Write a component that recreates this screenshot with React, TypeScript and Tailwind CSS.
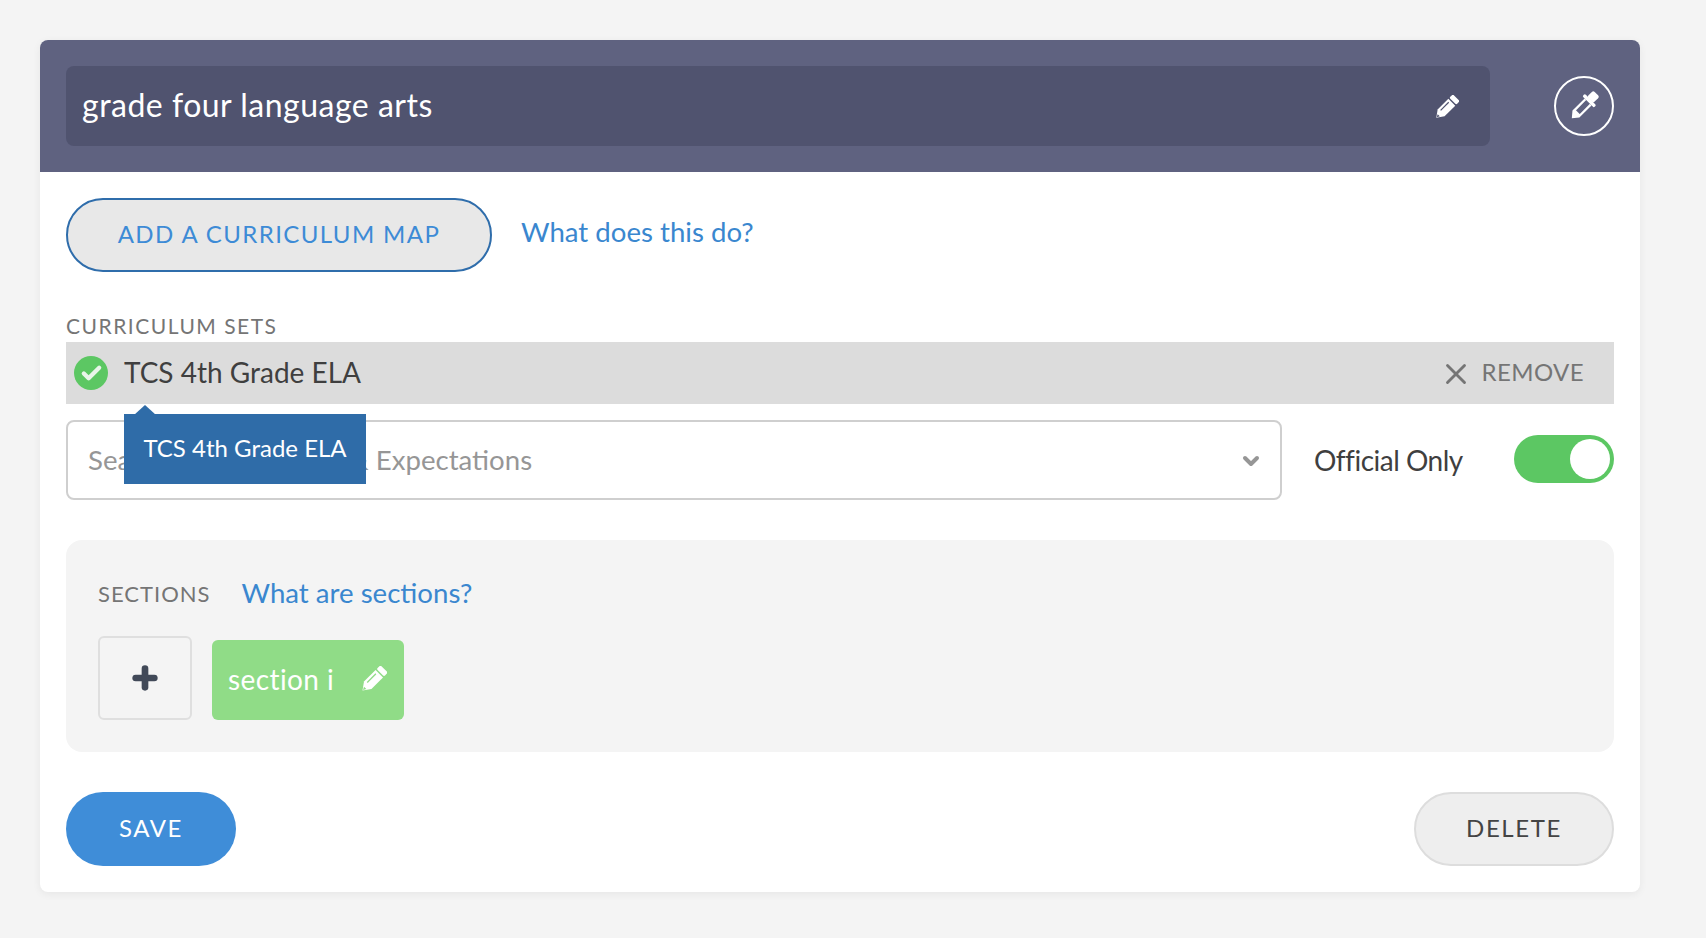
import { Check, ChevronDown, Plus, X } from 'lucide-react';

const font = "font-['Lato','Liberation_Sans',sans-serif]";

function PencilIcon({ className, lineClass, tipClass }: { className: string; lineClass: string; tipClass: string }) {
  return (
    <svg viewBox="0 0 24 24" className={className}>
      <g transform="rotate(45 12 12)">
        <rect x="7.5" y="-1.5" width="9" height="4.6" rx="1.2" fill="white" />
        <path d="M7.5 4.4h9v14l-4.5 6.3-4.5-6.3z" fill="white" />
        <path d="M10 6.5v10.5" className={lineClass} strokeWidth="1.1" fill="none" />
        <path d="M10.6 21.5l1.4 2.6 1.4-2.6z" className={tipClass} />
      </g>
    </svg>
  );
}

function DropperIcon() {
  return (
    <svg viewBox="0 0 24 24" className="w-[30px] h-[30px]">
      <g transform="rotate(45 12 12)">
        <rect x="8.5" y="-2" width="7" height="7" rx="1.6" fill="white" />
        <rect x="5.5" y="4.6" width="13" height="2.8" rx="1.2" fill="white" />
        <path d="M9 7.4v13.4l3 3.6 3-3.6V7.4" stroke="white" strokeWidth="1.8" fill="none" />
        <path d="M9 19h6v2l-3 3.4-3-3.4z" fill="white" />
      </g>
    </svg>
  );
}

export default function App() {
  return (
    <div className={`min-h-[938px] bg-[#f4f4f4] p-10 ${font}`}>
      <div className="w-[1600px] h-[852px] bg-white rounded-lg shadow-[0_2px_8px_rgba(0,0,0,0.06)] overflow-hidden">
        {/* Header */}
        <div className="h-[132px] bg-[#5f6280] flex items-center justify-between pl-[26px] pr-[26px]">
          <div className="w-[1424px] h-20 bg-[#50536f] rounded-lg flex items-center justify-between pl-4 pr-[31px]">
            <span className="text-white text-[32px] tracking-[0.5px] pb-[3px]">grade four language arts</span>
            <PencilIcon className="w-[26px] h-[26px] mt-[3px]" lineClass="stroke-[#50536f]" tipClass="fill-[#50536f]" />
          </div>
          <div className="w-[60px] h-[60px] rounded-full border-2 border-white flex items-center justify-center">
            <DropperIcon />
          </div>
        </div>

        <div className="px-[26px]">
          {/* Curriculum map */}
          <div className="flex items-center mt-[26px] h-[74px]">
            <button className="w-[426px] h-[74px] rounded-full bg-[#e8e8e8] border-2 border-[#2f6dab] text-[#3d8bd6] text-[24px] tracking-[1.4px] pb-[3px]">
              ADD A CURRICULUM MAP
            </button>
            <a className="ml-[29px] pb-[6px] text-[#3a87cf] text-[27.6px]">What does this do?</a>
          </div>

          {/* Curriculum sets */}
          <div className="mt-[39px] h-[31px] pb-[2px] flex items-center text-[#757575] text-[21px] tracking-[1.5px]">
            CURRICULUM SETS
          </div>
          <div className="relative">
            <div className="h-[62px] bg-[#dcdcdc] flex items-center justify-between pl-2 pr-[30px]">
              <div className="flex items-center">
                <span className="w-[34px] h-[34px] rounded-full bg-[#5cc763] flex items-center justify-center">
                  <Check className="w-[23px] h-[23px] text-[#e8f5e9]" strokeWidth={4.5} />
                </span>
                <span className="ml-4 pb-[3px] text-[#3f3f3f] text-[28px]">TCS 4th Grade ELA</span>
              </div>
              <div className="flex items-center text-[#757575]">
                <X className="w-[34px] h-[34px] mt-[1px]" strokeWidth={2} />
                <span className="ml-[9px] pb-[2px] text-[24px] tracking-[0.4px]">REMOVE</span>
              </div>
            </div>

            {/* Tooltip */}
            <div className="absolute left-[58px] top-[72px] w-[242px] h-[70px] bg-[#2f6ca8] text-white text-[24px] pb-[3px] flex items-center justify-center z-10">
              <span className="absolute -top-[9px] left-[10px] w-0 h-0 border-x-[11px] border-x-transparent border-b-[10px] border-b-[#2f6ca8]" />
              TCS 4th Grade ELA
            </div>

            {/* Search row */}
            <div className="mt-[16px] flex items-center justify-between">
              <div className="w-[1216px] h-[80px] rounded-lg border-2 border-[#cfcfcf] flex items-center justify-between pl-[20px] pr-[17px]">
                <span className="text-[#969696] text-[27.6px]">Search Standards Set &amp; Expectations</span>
                <ChevronDown className="w-[24px] h-[24px] mt-[2px] text-[#969696]" strokeWidth={4} />
              </div>
              <span className="ml-[32px] text-[#3f3f3f] text-[28px] tracking-[-0.5px]">Official Only</span>
              <div className="ml-auto mb-[3px] w-[100px] h-[48px] rounded-full bg-[#5cc763] flex items-center justify-end pr-1">
                <span className="w-10 h-10 rounded-full bg-white" />
              </div>
            </div>
          </div>

          {/* Sections */}
          <div className="mt-[40px] h-[212px] bg-[#f4f4f4] rounded-2xl pl-8 pt-[37px]">
            <div className="flex items-center h-[32px]">
              <span className="text-[#757575] text-[22px] tracking-[1px]">SECTIONS</span>
              <a className="ml-[31px] text-[#3a87cf] text-[27.6px]">What are sections?</a>
            </div>
            <div className="flex items-end mt-[27px]">
              <button className="w-[94px] h-[84px] rounded-md border-2 border-[#dfdfdf] flex items-center justify-center">
                <Plus className="w-[32px] h-[32px] text-[#414958]" strokeWidth={5} />
              </button>
              <div className="ml-5 w-[192px] h-[80px] rounded-md bg-[#90dc87] flex items-center justify-between pl-4 pr-[17px]">
                <span className="text-white text-[28px] tracking-[0.4px] pb-[2px]">section i</span>
                <PencilIcon className="w-[28px] h-[28px]" lineClass="stroke-[#90dc87]" tipClass="fill-[#90dc87]" />
              </div>
            </div>
          </div>

          {/* Footer */}
          <div className="mt-10 flex justify-between">
            <button className="w-[170px] h-[74px] rounded-full bg-[#3f8dd8] text-white text-[24px] tracking-[1.6px] pb-[2px]">SAVE</button>
            <button className="w-[200px] h-[74px] rounded-full bg-[#eeeeee] border-2 border-[#dddddd] text-[#444444] text-[24px] tracking-[1.6px] pb-[2px]">DELETE</button>
          </div>
        </div>
      </div>
    </div>
  );
}
